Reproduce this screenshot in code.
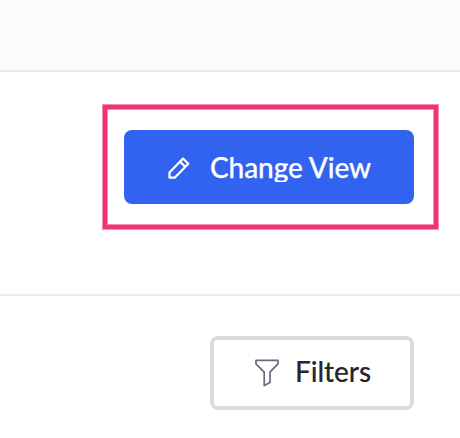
<main>
  <header></header>
  <section class="actions">
    <div class="highlight">
      <button class="primary">
        <svg width="24" height="24" viewBox="0 0 24 24" fill="none" stroke="#fff" stroke-width="2.2" stroke-linejoin="round">
          <path d="M2.5 21.7V16.4L16 2.5L21.3 7.7L7.7 21.7Z M13 5.6L18.2 10.8" />
        </svg>
        <span>Change View</span>
      </button>
    </div>
  </section>
  <section class="filters">
    <button class="secondary">
      <svg width="26" height="30" viewBox="0 0 26 30" fill="none" stroke="#686a82" stroke-width="1.7" stroke-linejoin="round">
        <path d="M2 2.3H24V5.9L16 14.2V24.4L10.2 27.6V14.2L2 5.9Z" />
      </svg>
      <span>Filters</span>
    </button>
  </section>
</main>

<style>
  main {
    width: 460px;
    height: 438px;
    overflow: hidden;
    background: #fff;
    font-family: Lato, sans-serif;
  }
  header {
    box-sizing: border-box;
    height: 72px;
    background: #fcfcfe;
    border-bottom: 2px solid #e9e9ee;
  }
  section {
    box-sizing: border-box;
    display: flex;
    justify-content: flex-end;
    align-items: flex-start;
  }
  .actions {
    height: 224px;
    padding: 33px 22px 0 0;
    border-bottom: 2px solid #ebebee;
  }
  .filters {
    padding: 40px 46px 0 0;
  }
  .highlight {
    box-sizing: border-box;
    width: 335px;
    height: 124px;
    border: 4px solid #ee3377;
    padding: 21px 20px 0 17px;
    box-shadow: 0 0 0 1px #f48db4, inset 0 0 0 1px #f48db4;
  }
  button {
    box-sizing: border-box;
    display: flex;
    align-items: center;
    height: 74px;
    border: 0;
    font: 500 28px/28px Lato, sans-serif;
    letter-spacing: -0.07px;
    white-space: nowrap;
  }
  svg {
    flex: none;
  }
  .primary {
    width: 290px;
    padding: 2px 0 0 43px;
    gap: 19px;
    border-radius: 8px;
    background: #3262f0;
    color: #fff;
    -webkit-text-stroke: 0.25px currentColor;
  }
  .primary span {
    height: 28px;
    line-height: 26px;
    overflow: hidden;
  }
  .secondary {
    width: 204px;
    padding: 0 0 0 40px;
    gap: 15px;
    border: 4px solid #dadbdf;
    border-radius: 8px;
    background: #fff;
    color: #26262c;
    -webkit-text-stroke: 0.1px currentColor;
  }
  .secondary span {
    padding-bottom: 4px;
  }
</style>
